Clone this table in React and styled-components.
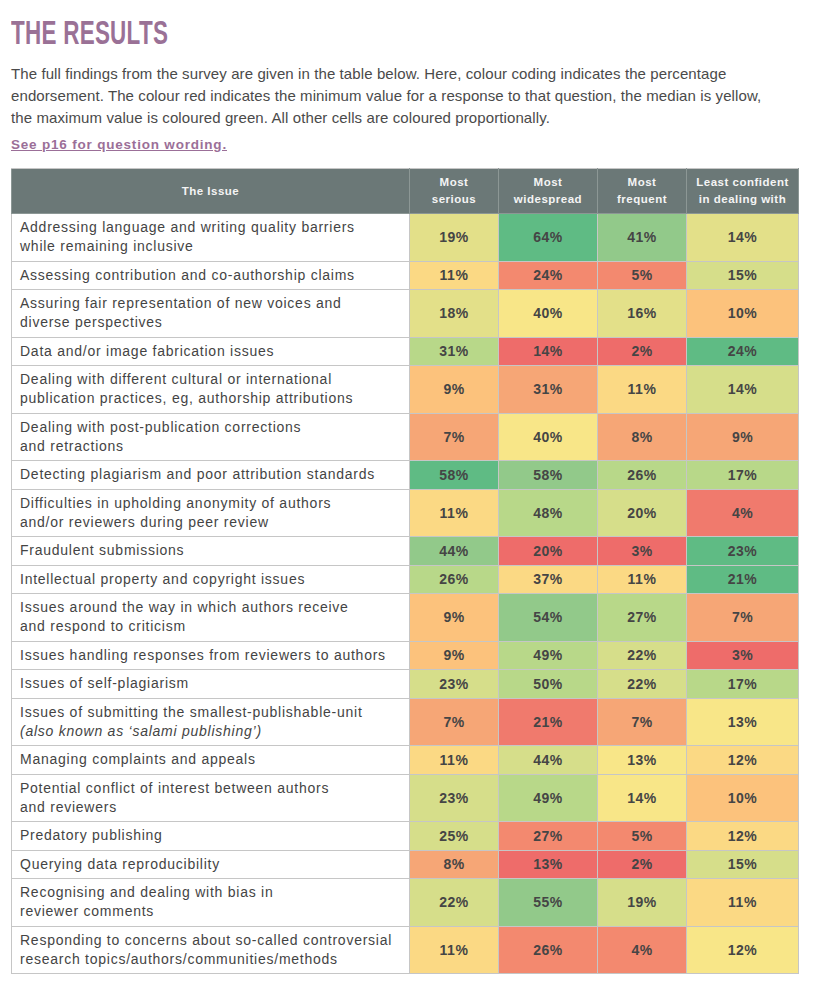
import React from "react";
import styled, { createGlobalStyle } from "styled-components";

const GlobalStyle = createGlobalStyle`
   body {
      margin: 0;
      background: #ffffff;
      font-family: "Liberation Sans", Arial, sans-serif;
   }
`;

// colour steps read from the printed heat map
const C = {
   G1: "#5fbb84",
   G2: "#92c98a",
   G3: "#b8d889",
   G4: "#d6de8a",
   Y0: "#e3e089",
   Y: "#f8e688",
   Y2: "#fbd984",
   O1: "#fcc27c",
   O2: "#f6a676",
   R1: "#f3896f",
   R2: "#f07a6d",
   R3: "#ee6c6a",
};

const rows = [
   [["Addressing language and writing quality barriers", "while remaining inclusive"], [[19, "Y0"], [64, "G1"], [41, "G2"], [14, "Y0"]]],
   [["Assessing contribution and co-authorship claims"], [[11, "Y2"], [24, "R1"], [5, "R1"], [15, "G4"]]],
   [["Assuring fair representation of new voices and", "diverse perspectives"], [[18, "Y0"], [40, "Y"], [16, "Y0"], [10, "O1"]]],
   [["Data and/or image fabrication issues"], [[31, "G3"], [14, "R3"], [2, "R3"], [24, "G1"]]],
   [["Dealing with different cultural or international", "publication practices, eg, authorship attributions"], [[9, "O1"], [31, "O2"], [11, "Y2"], [14, "G4"]]],
   [["Dealing with post-publication corrections", "and retractions"], [[7, "O2"], [40, "Y"], [8, "O2"], [9, "O2"]]],
   [["Detecting plagiarism and poor attribution standards"], [[58, "G1"], [58, "G2"], [26, "G3"], [17, "G3"]]],
   [["Difficulties in upholding anonymity of authors", "and/or reviewers during peer review"], [[11, "Y2"], [48, "G3"], [20, "G4"], [4, "R2"]]],
   [["Fraudulent submissions"], [[44, "G2"], [20, "R3"], [3, "R3"], [23, "G1"]]],
   [["Intellectual property and copyright issues"], [[26, "G3"], [37, "Y2"], [11, "Y2"], [21, "G1"]]],
   [["Issues around the way in which authors receive", "and respond to criticism"], [[9, "O1"], [54, "G2"], [27, "G3"], [7, "O2"]]],
   [["Issues handling responses from reviewers to authors"], [[9, "O1"], [49, "G3"], [22, "G4"], [3, "R3"]]],
   [["Issues of self-plagiarism"], [[23, "G4"], [50, "G3"], [22, "G4"], [17, "G3"]]],
   [["Issues of submitting the smallest-publishable-unit", "(also known as \u2018salami publishing\u2019)"], [[7, "O2"], [21, "R2"], [7, "O2"], [13, "Y"]], true],
   [["Managing complaints and appeals"], [[11, "Y2"], [44, "G4"], [13, "Y"], [12, "Y2"]]],
   [["Potential conflict of interest between authors", "and reviewers"], [[23, "G4"], [49, "G3"], [14, "Y"], [10, "O1"]]],
   [["Predatory publishing"], [[25, "G4"], [27, "R1"], [5, "R1"], [12, "Y2"]]],
   [["Querying data reproducibility"], [[8, "O2"], [13, "R3"], [2, "R3"], [15, "G4"]]],
   [["Recognising and dealing with bias in", "reviewer comments"], [[22, "G4"], [55, "G2"], [19, "G4"], [11, "Y2"]]],
   [["Responding to concerns about so-called controversial", "research topics/authors/communities/methods"], [[11, "Y2"], [26, "R1"], [4, "R1"], [12, "Y"]]],
];

const headers = [
   [398, "The Issue"],
   [89, "Most", "serious"],
   [99, "Most", "widespread"],
   [89, "Most", "frequent"],
   [112, "Least confident", "in dealing with"],
];

function App() {
   return (
      <Page>
         <GlobalStyle />
         <Title>
            <span>THE RESULTS</span>
         </Title>
         <Intro>
            The full findings from the survey are given in the table below. Here, colour coding indicates the percentage
            <br />
            endorsement. The colour red indicates the minimum value for a response to that question, the median is yellow,
            <br />
            the maximum value is coloured green. All other cells are coloured proportionally.
         </Intro>
         <WordingLink href="#p16">See p16 for question wording.</WordingLink>
         <Table>
            <thead>
               <tr>
                  {headers.map(([w, a, b], i) => (
                     <HeadCell key={i} $w={w}>
                        {a}
                        {b && (
                           <>
                              <br />
                              {b}
                           </>
                        )}
                     </HeadCell>
                  ))}
               </tr>
            </thead>
            <tbody>
               {rows.map(([lines, vals, italic], i) => (
                  <tr key={i}>
                     <IssueCell>
                        {lines[0]}
                        {lines[1] && (
                           <>
                              <br />
                              {italic ? <em>{lines[1]}</em> : lines[1]}
                           </>
                        )}
                     </IssueCell>
                     {vals.map(([v, c], j) => (
                        <ValueCell key={j} $bg={C[c]}>
                           {v}%
                        </ValueCell>
                     ))}
                  </tr>
               ))}
            </tbody>
         </Table>
      </Page>
   );
}

export default App;

const Page = styled.div`
   padding: 15px 18px 20px 11px;
   color: #474747;
`;

const Title = styled.h1`
   margin: 0;
   height: 36px;
   font-size: 32.5px;
   line-height: 36px;
   font-weight: bold;
   color: #9a7196;
   white-space: nowrap;
   span {
      display: inline-block;
      transform: scaleX(0.69);
      transform-origin: left center;
      letter-spacing: 0.4px;
   }
`;

const Intro = styled.p`
   margin: 12px 0 0;
   font-size: 15px;
   line-height: 22px;
   letter-spacing: 0.1px;
   color: #4a4a4a;
   white-space: nowrap;
`;

const WordingLink = styled.a`
   display: inline-block;
   margin: 6px 0 13px;
   font-size: 13.5px;
   line-height: 20px;
   font-weight: bold;
   letter-spacing: 0.8px;
   color: #9b6f98;
   text-decoration: underline;
`;

const Table = styled.table`
   width: 787px;
   table-layout: fixed;
   border-collapse: collapse;
   border: 1px solid #c6c6c6;
`;

const HeadCell = styled.th`
   box-sizing: border-box;
   width: ${(p) => p.$w}px;
   padding: 5px 2px;
   background: #6b7877;
   color: #f4f4f4;
   font-size: 11.5px;
   line-height: 17px;
   font-weight: bold;
   letter-spacing: 0.5px;
   text-align: center;
   border: 1px solid #8c9795;
   border-top-color: #c6c6c6;
`;

const IssueCell = styled.td`
   padding: 4.25px 8px;
   font-size: 14px;
   line-height: 19px;
   letter-spacing: 0.75px;
   color: #444444;
   border: 1px solid #c6c6c6;
   background: #ffffff;
   white-space: nowrap;
   em {
      font-style: italic;
   }
`;

const ValueCell = styled.td`
   padding: 0 2px;
   text-align: center;
   vertical-align: middle;
   font-size: 14px;
   font-weight: bold;
   letter-spacing: 0.5px;
   color: #454545;
   background: ${(p) => p.$bg};
   border: 1px solid #c6c6c6;
`;
